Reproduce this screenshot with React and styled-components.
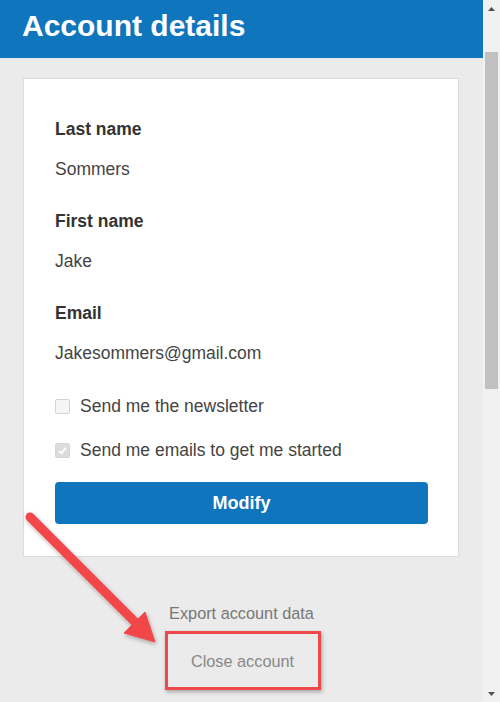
import React from "react";
import styled, { createGlobalStyle } from "styled-components";

const GlobalStyle = createGlobalStyle`
  html, body {
    margin: 0;
    padding: 0;
    height: 702px;
    overflow: hidden;
    background: #ebebeb;
    font-family: "Liberation Sans", Arial, sans-serif;
  }
`;

const Window = styled.div`
  display: flex;
  width: 500px;
  height: 702px;
  position: relative;
`;

const Page = styled.div`
  flex: 1;
  display: flex;
  flex-direction: column;
  background: #ebebeb;
`;

const Header = styled.header`
  height: 58px;
  box-sizing: border-box;
  padding: 9px 0 0 22px;
  background: #0f75bd;
`;

const Title = styled.h1`
  margin: 0;
  font-size: 30px;
  line-height: 34px;
  font-weight: 700;
  color: #fff;
`;

const Card = styled.section`
  margin: 20px 24px 0 23px;
  padding: 40px 30px 32px 31px;
  background: #fff;
  border: 1px solid #dcdcdc;
  display: flex;
  flex-direction: column;
`;

const Label = styled.div`
  font-size: 17.5px;
  line-height: 20px;
  font-weight: 700;
  color: #333;
  margin-top: ${({ first }) => (first ? "0" : "32px")};
`;

const Value = styled.div`
  font-size: 17.5px;
  line-height: 20px;
  color: #444;
  margin-top: 20px;
`;

const CheckRow = styled.label`
  display: flex;
  align-items: center;
  gap: 10px;
  font-size: 17.5px;
  line-height: 20px;
  color: #444;
  margin-top: ${({ gap }) => gap}px;
`;

const Box = styled.span`
  width: 15px;
  height: 15px;
  box-sizing: border-box;
  border-radius: 2px;
  border: 1px solid ${({ checked }) => (checked ? "#d6d6d6" : "#d3d3d3")};
  background: ${({ checked }) => (checked ? "#dcdcdc" : "#f6f6f6")};
  display: flex;
  align-items: center;
  justify-content: center;
`;

const Button = styled.button`
  margin-top: 22px;
  height: 42px;
  border: none;
  border-radius: 4px;
  background: #0f75bd;
  color: #fff;
  font-family: inherit;
  font-size: 18px;
  font-weight: 700;
  cursor: pointer;
`;

const Footer = styled.div`
  display: flex;
  flex-direction: column;
  align-items: center;
  padding-top: 46px;
`;

const FooterLink = styled.a`
  font-size: 16.3px;
  line-height: 20px;
  color: ${({ muted }) => (muted ? "#888" : "#777")};
  text-decoration: none;
`;

const Highlight = styled.div`
  margin-top: 8px;
  width: 156px;
  height: 59px;
  box-sizing: border-box;
  border: 3px solid #f0474a;
  box-shadow: 1px 2px 4px rgba(0, 0, 0, 0.3);
  display: flex;
  align-items: center;
  justify-content: center;
  transform: translateX(1px);
`;

const Scrollbar = styled.div`
  width: 17px;
  background: #f1f1f1;
  display: flex;
  flex-direction: column;
  align-items: center;
`;

const ScrollArrow = styled.div`
  height: 17px;
  display: flex;
  align-items: center;
  justify-content: center;
  color: #505050;
`;

const Thumb = styled.div`
  width: 13px;
  height: 337px;
  margin-top: 35px;
  background: #c1c1c1;
`;

const Spacer = styled.div`
  flex: 1;
`;

const Arrow = styled.svg`
  position: absolute;
  left: 0;
  top: 490px;
  pointer-events: none;
  overflow: visible;
`;

function Check({ checked }) {
  return (
    <Box checked={checked}>
      {checked && (
        <svg width="11" height="11" viewBox="0 0 11 11">
          <path d="M2 5.8 L4.4 8.2 L9 2.8" fill="none" stroke="#fff" strokeWidth="1.8" />
        </svg>
      )}
    </Box>
  );
}

export default function App() {
  return (
    <>
      <GlobalStyle />
      <Window>
        <Page>
          <Header>
            <Title>Account details</Title>
          </Header>
          <Card>
            <Label first>Last name</Label>
            <Value>Sommers</Value>
            <Label>First name</Label>
            <Value>Jake</Value>
            <Label>Email</Label>
            <Value>Jakesommers@gmail.com</Value>
            <CheckRow gap={33}>
              <Check />
              Send me the newsletter
            </CheckRow>
            <CheckRow gap={24}>
              <Check checked />
              Send me emails to get me started
            </CheckRow>
            <Button>Modify</Button>
          </Card>
          <Footer>
            <FooterLink href="#">Export account data</FooterLink>
            <Highlight>
              <FooterLink href="#" muted>Close account</FooterLink>
            </Highlight>
          </Footer>
        </Page>
        <Scrollbar>
          <ScrollArrow>
            <svg width="7" height="4" viewBox="0 0 7 4"><path d="M0 4 L3.5 0 L7 4Z" fill="currentColor" /></svg>
          </ScrollArrow>
          <Thumb />
          <Spacer />
          <ScrollArrow>
            <svg width="7" height="4" viewBox="0 0 7 4"><path d="M0 0 L3.5 4 L7 0Z" fill="currentColor" /></svg>
          </ScrollArrow>
        </Scrollbar>
        <Arrow width="180" height="170">
          <defs>
            <filter id="sh" x="-20%" y="-20%" width="140%" height="140%">
              <feDropShadow dx="1" dy="2" stdDeviation="2" floodColor="#000" floodOpacity="0.3" />
            </filter>
          </defs>
          <g filter="url(#sh)" fill="#f2474a" stroke="#f2474a">
            <line x1="30" y1="27" x2="135" y2="132" strokeWidth="9" strokeLinecap="round" />
            <polygon points="124,143 145,122 155,152" strokeWidth="1" strokeLinejoin="round" />
          </g>
        </Arrow>
      </Window>
    </>
  );
}
